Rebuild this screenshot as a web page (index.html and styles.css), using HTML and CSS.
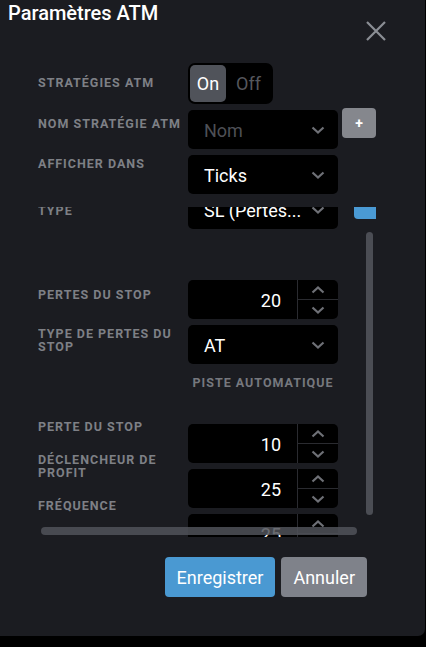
FILE: index.html
```html
<!DOCTYPE html>
<html lang="fr">
<head>
<meta charset="utf-8">
<title>Paramètres ATM</title>
<link rel="stylesheet" href="styles.css">
</head>
<body>
<div class="dialog">
  <h1 class="title">Paramètres ATM</h1>
  <button class="close" aria-label="Fermer">
    <svg width="20" height="20" viewBox="0 0 20 20"><path d="M1 1 L19 19 M19 1 L1 19" stroke="#8b8e95" stroke-width="2.2" fill="none"/></svg>
  </button>

  <div class="form">
    <div class="row">
      <div class="label shift-13">STRATÉGIES ATM</div>
      <div class="toggle">
        <span class="seg seg-on">On</span>
        <span class="seg seg-off">Off</span>
      </div>
    </div>
    <div class="row">
      <div class="label shift-7">NOM STRATÉGIE ATM</div>
      <div class="select placeholder">Nom
        <svg class="chev" width="14" height="8" viewBox="0 0 14 8"><polyline points="1.5,1.5 7,6.5 12.5,1.5" fill="none" stroke="#6e7076" stroke-width="2.2"/></svg>
      </div>
      <button class="add-btn">+</button>
    </div>
    <div class="row">
      <div class="label shift-2">AFFICHER DANS</div>
      <div class="select">Ticks
        <svg class="chev" width="14" height="8" viewBox="0 0 14 8"><polyline points="1.5,1.5 7,6.5 12.5,1.5" fill="none" stroke="#6e7076" stroke-width="2.2"/></svg>
      </div>
    </div>

    <div class="scroller">
      <div class="scroll-content">
        <div class="row">
          <div class="label shift-14">TYPE</div>
          <div class="select">SL (Pertes...
            <svg class="chev" width="14" height="8" viewBox="0 0 14 8"><polyline points="1.5,1.5 7,6.5 12.5,1.5" fill="none" stroke="#6e7076" stroke-width="2.2"/></svg>
          </div>
          <button class="blue-btn"></button>
        </div>

        <div class="row gap-51">
          <div class="label shift-8">PERTES DU STOP</div>
          <div class="spinner">
            <span class="spin-val">20</span>
            <span class="spin-btns">
              <span class="spin-btn"><svg width="14" height="8" viewBox="0 0 14 8"><polyline points="1.5,6.5 7,1.5 12.5,6.5" fill="none" stroke="#6e7076" stroke-width="2.2"/></svg></span>
              <span class="spin-btn"><svg width="14" height="8" viewBox="0 0 14 8"><polyline points="1.5,1.5 7,6.5 12.5,1.5" fill="none" stroke="#6e7076" stroke-width="2.2"/></svg></span>
            </span>
          </div>
        </div>

        <div class="row">
          <div class="label shift-2">TYPE DE PERTES DU<br>STOP</div>
          <div class="select">AT
            <svg class="chev" width="14" height="8" viewBox="0 0 14 8"><polyline points="1.5,1.5 7,6.5 12.5,1.5" fill="none" stroke="#6e7076" stroke-width="2.2"/></svg>
          </div>
        </div>

        <div class="row gap-12">
          <div class="label"></div>
          <div class="section">PISTE AUTOMATIQUE</div>
        </div>

        <div class="row gap-35">
          <div class="label shift-m4">PERTE DU STOP</div>
          <div class="spinner">
            <span class="spin-val">10</span>
            <span class="spin-btns">
              <span class="spin-btn"><svg width="14" height="8" viewBox="0 0 14 8"><polyline points="1.5,6.5 7,1.5 12.5,6.5" fill="none" stroke="#6e7076" stroke-width="2.2"/></svg></span>
              <span class="spin-btn"><svg width="14" height="8" viewBox="0 0 14 8"><polyline points="1.5,1.5 7,6.5 12.5,1.5" fill="none" stroke="#6e7076" stroke-width="2.2"/></svg></span>
            </span>
          </div>
        </div>

        <div class="row">
          <div class="label shift-m16">DÉCLENCHEUR DE<br>PROFIT</div>
          <div class="spinner">
            <span class="spin-val">25</span>
            <span class="spin-btns">
              <span class="spin-btn"><svg width="14" height="8" viewBox="0 0 14 8"><polyline points="1.5,6.5 7,1.5 12.5,6.5" fill="none" stroke="#6e7076" stroke-width="2.2"/></svg></span>
              <span class="spin-btn"><svg width="14" height="8" viewBox="0 0 14 8"><polyline points="1.5,1.5 7,6.5 12.5,1.5" fill="none" stroke="#6e7076" stroke-width="2.2"/></svg></span>
            </span>
          </div>
        </div>

        <div class="row">
          <div class="label shift-m15">FRÉQUENCE</div>
          <div class="spinner">
            <span class="spin-val">25</span>
            <span class="spin-btns">
              <span class="spin-btn"><svg width="14" height="8" viewBox="0 0 14 8"><polyline points="1.5,6.5 7,1.5 12.5,6.5" fill="none" stroke="#6e7076" stroke-width="2.2"/></svg></span>
              <span class="spin-btn"><svg width="14" height="8" viewBox="0 0 14 8"><polyline points="1.5,1.5 7,6.5 12.5,1.5" fill="none" stroke="#6e7076" stroke-width="2.2"/></svg></span>
            </span>
          </div>
        </div>
      </div>
      <div class="vbar"></div>
      <div class="hbar"></div>
    </div>
  </div>

  <div class="footer">
    <button class="btn btn-primary">Enregistrer</button>
    <button class="btn btn-secondary">Annuler</button>
  </div>
</div>
</body>
</html>
```

FILE: styles.css
```css
* { box-sizing: border-box; }
html, body { margin: 0; padding: 0; background: #000; }
body { font-family: Roboto, "Liberation Sans", sans-serif; width: 426px; height: 647px; overflow: hidden; }

.dialog {
  position: relative;
  width: 425px;
  height: 636px;
  background: #1b1c21;
  border-bottom-right-radius: 7px;
  padding-top: 1px;
}

.title {
  margin: 0;
  padding-left: 8px;
  font-size: 20px;
  line-height: 24px;
  font-weight: 500;
  color: #fff;
}

.close {
  position: absolute;
  left: 366px;
  top: 21px;
  width: 20px;
  height: 20px;
  padding: 0;
  border: 0;
  background: none;
  display: block;
}
.close svg { display: block; }

.form {
  padding-left: 38px;
  margin-top: 38px;
}

.row {
  display: grid;
  grid-template-columns: 150px 150px auto;
  align-items: start;
  margin-top: 6px;
}
.row:first-child { margin-top: 0; }

.label {
  font-size: 12.5px;
  line-height: 13px;
  font-weight: 700;
  letter-spacing: 1px;
  color: #7e8086;
  white-space: nowrap;
}
.shift-13 { margin-top: 13px; }
.shift-7 { margin-top: 7px; }
.shift-2 { margin-top: 2px; }
.shift-14 { margin-top: 14px; }
.shift-8 { margin-top: 8px; }
.shift-m4 { margin-top: -4px; }
.shift-m16 { margin-top: -16px; }
.shift-m15 { margin-top: -15px; }

.gap-51 { margin-top: 51px; }
.gap-12 { margin-top: 12px; }
.gap-35 { margin-top: 35px; }

.toggle {
  width: 85px;
  height: 41px;
  background: #000;
  border-radius: 7px;
  padding: 2px;
  display: flex;
}
.seg {
  height: 37px;
  display: flex;
  align-items: center;
  justify-content: center;
  font-size: 18px;
}
.seg-on {
  width: 36px;
  background: #50535a;
  border-radius: 5px;
  color: #fff;
}
.seg-off {
  flex: 1;
  color: #55575d;
}

.select {
  position: relative;
  width: 150px;
  height: 39px;
  background: #000;
  border-radius: 5px;
  padding-left: 16px;
  padding-top: 1px;
  display: flex;
  align-items: center;
  font-size: 18px;
  color: #fff;
  white-space: nowrap;
  overflow: hidden;
}
.select.placeholder { color: #4e5056; }
.chev {
  position: absolute;
  right: 13px;
  top: 16px;
}

.add-btn {
  margin-left: 4px;
  margin-top: -2px;
  width: 34px;
  height: 30px;
  border: 0;
  border-radius: 4px;
  background: #85878d;
  color: #fff;
  font-family: Roboto, sans-serif;
  font-weight: 700;
  font-size: 14px;
  padding: 0;
  line-height: 30px;
}

.scroller {
  position: relative;
  margin-top: 13px;
  width: 338px;
  height: 330px;
  overflow: hidden;
}
.scroll-content {
  margin-top: -17px;
  width: 380px;
}

.blue-btn {
  margin-left: 16px;
  margin-top: -1px;
  width: 34px;
  height: 30px;
  border: 0;
  border-radius: 4px;
  background: #4a9ad4;
  padding: 0;
}

.spinner {
  width: 150px;
  height: 39px;
  background: #000;
  border-radius: 5px;
  display: flex;
  overflow: hidden;
}
.spin-val {
  width: 109px;
  text-align: right;
  padding-right: 16px;
  font-size: 18px;
  color: #fff;
  line-height: 41px;
}
.spin-btns {
  flex: 1;
  display: flex;
  flex-direction: column;
  border-left: 1px solid #2a2b30;
}
.spin-btn {
  flex: 1;
  display: flex;
  align-items: center;
  justify-content: center;
}
.spin-btn + .spin-btn { border-top: 1px solid #2a2b30; }
.spin-btn svg { display: block; }

.section {
  text-align: center;
  font-size: 12.5px;
  line-height: 13px;
  font-weight: 700;
  letter-spacing: 1px;
  color: #76787e;
  white-space: nowrap;
}

.vbar {
  position: absolute;
  left: 328px;
  top: 25px;
  width: 7px;
  height: 283px;
  border-radius: 4px;
  background: #4b4d54;
}
.hbar {
  position: absolute;
  left: 3px;
  top: 320px;
  width: 316px;
  height: 8px;
  border-radius: 4px;
  background: rgba(80, 82, 89, 0.85);
}

.footer {
  display: flex;
  justify-content: flex-end;
  gap: 6px;
  padding-right: 58px;
  margin-top: 20px;
}
.btn {
  height: 40px;
  border: 0;
  border-radius: 4px;
  padding: 0 12px;
  font-family: Roboto, sans-serif;
  font-size: 18px;
  color: #fff;
}
.btn-primary { background: #4a99d2; }
.btn-secondary { background: #7f828a; }
```
